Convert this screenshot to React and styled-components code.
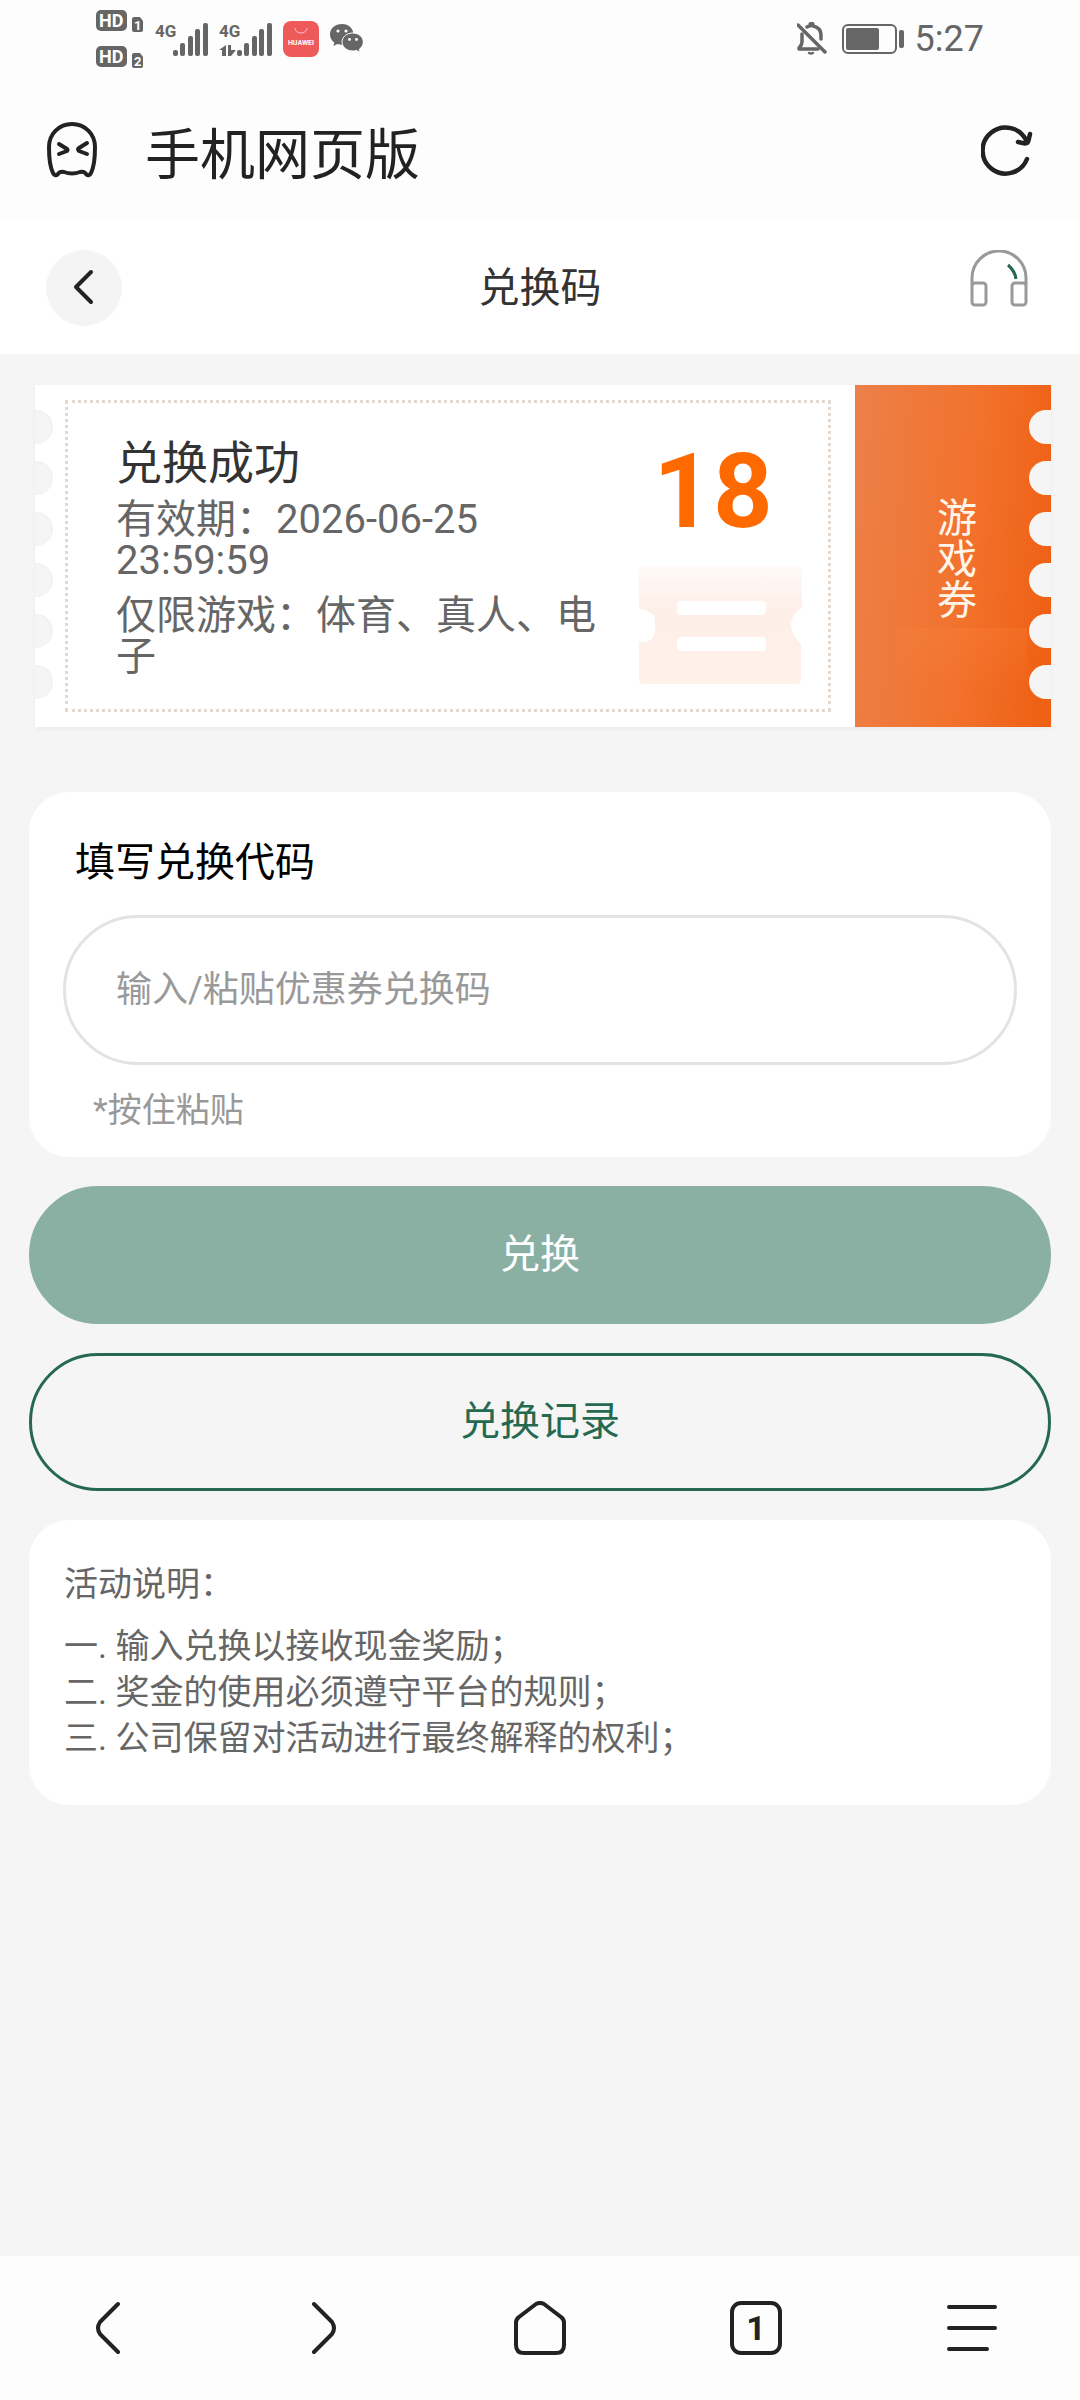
import React, { useState } from "react";
import styled, { createGlobalStyle } from "styled-components";

const GlobalStyle = createGlobalStyle`
  * {
    box-sizing: border-box;
  }

  body {
    margin: 0;
    background-color: #f5f5f5;
    font-family: Roboto, "Noto Sans CJK SC", sans-serif;
  }

  button,
  input {
    font-family: inherit;
  }
`;

const Page = styled.div`
  display: flex;
  flex-direction: column;
  min-height: 100vh;
`;

const StatusBar = styled.div`
  display: flex;
  justify-content: space-between;
  align-items: center;
  height: 78px;
  padding: 0 96px;
  background-color: #fdfdfd;
  color: #666;
`;

const StatusGroup = styled.div`
  display: flex;
  align-items: center;
  gap: 11px;
`;

const Clock = styled.span`
  font-size: 36px;
  line-height: 40px;
`;

const AppBar = styled.header`
  display: flex;
  align-items: center;
  gap: 46px;
  height: 144px;
  padding: 0 47px;
  background-color: #fdfdfd;
`;

const SiteName = styled.span`
  flex: 1;
  padding-top: 10px;
  color: #222;
  font-size: 55px;
  line-height: 60px;
`;

const IconButton = styled.button`
  display: flex;
  align-items: center;
  justify-content: center;
  padding: 0;
  border: 0;
  background-color: transparent;
  cursor: pointer;
`;

const NavBar = styled.nav`
  display: grid;
  grid-template-columns: 1fr auto 1fr;
  align-items: center;
  height: 132px;
  padding: 0 46px;
  background-color: #fff;
`;

const BackButton = styled(IconButton)`
  width: 76px;
  height: 76px;
  border-radius: 50%;
  background-color: #f4f4f4;
`;

const ServiceButton = styled(IconButton)`
  justify-self: end;
`;

const PageTitle = styled.h1`
  margin: 0;
  color: #333;
  font-size: 41px;
  font-weight: 400;
  line-height: 48px;
`;

const Main = styled.main`
  flex: 1;
  display: flex;
  flex-direction: column;
  gap: 29px;
  padding: 31px 29px;
`;

const Ticket = styled.section`
  position: relative;
  display: flex;
  margin: 0 0 36px 6px;
  box-shadow: 0 2px 4px rgba(0, 0, 0, 0.04);
`;

const TicketBody = styled.div`
  flex: 1;
  padding: 15px 24px 15px 30px;
  background-color: #fff;
`;

const TicketFrame = styled.div`
  display: flex;
  justify-content: space-between;
  min-height: 312px;
  padding: 0 26px 0 48px;
  border: 3px dotted #e4d8ce;
`;

const TicketText = styled.div`
  width: 500px;
  padding-top: 34px;
`;

const TicketTitle = styled.h2`
  margin: 0 0 10px;
  color: #333;
  font-size: 46px;
  font-weight: 400;
  line-height: 52px;
`;

const TicketLine = styled.p`
  margin: 0 0 14px;
  color: #666;
  font-size: 40px;
  line-height: 41px;
`;

const TicketSide = styled.div`
  display: flex;
  flex-direction: column;
  gap: 22px;
  padding-top: 37px;
`;

const Amount = styled.strong`
  padding-right: 14px;
  color: #ff6a00;
  font-size: 104px;
  font-weight: 700;
  line-height: 104px;
  text-align: center;
`;

const TicketStub = styled.div`
  display: flex;
  align-items: center;
  justify-content: center;
  width: 196px;
  padding: 6px 0 0 8px;
  background: linear-gradient(
        rgba(255, 140, 70, 0.18),
        rgba(255, 140, 70, 0)
      )
      42px 243px / 130px 60px no-repeat,
    linear-gradient(95deg, #ec8049 0%, #f2722d 55%, #ef6216 92%);
`;

const StubLabel = styled.span`
  width: 40px;
  color: #fff5ea;
  font-size: 40px;
  line-height: 41px;
  word-break: break-all;
`;

const Notches = styled.div`
  position: absolute;
  top: 25px;
  ${(props) => (props.$side === "left" ? "left: 0;" : "right: 0;")}
  display: flex;
  flex-direction: column;
  gap: 17px;
`;

const Notch = styled.span`
  width: ${(props) => (props.$side === "left" ? "18px" : "22px")};
  height: 34px;
  border-radius: ${(props) =>
    props.$side === "left" ? "0 17px 17px 0" : "17px 0 0 17px"};
  background-color: #f5f5f5;
  box-shadow: ${(props) =>
    props.$side === "left" ? "inset -1px 1px 3px #f0f0f0" : "none"};
`;

const Card = styled.section`
  padding: ${(props) => props.$padding};
  border-radius: 40px;
  background-color: #fff;
`;

const CodeLabel = styled.label`
  display: block;
  padding-left: 12px;
  margin-bottom: 24px;
  color: #000;
  font-size: 40px;
  line-height: 56px;
`;

const CodeInput = styled.input`
  display: block;
  width: 100%;
  height: 150px;
  padding: 0 50px;
  border: 3px solid #e3e3e3;
  border-radius: 75px;
  background-color: #fff;
  color: #333;
  font-size: 36px;
  outline: none;

  &::placeholder {
    color: #999;
    opacity: 1;
  }
`;

const Hint = styled.p`
  margin: 22px 0 0 30px;
  color: #999;
  font-size: 34px;
  line-height: 46px;
`;

const ActionButton = styled.button`
  height: 138px;
  border: 3px solid ${(props) => (props.$outline ? "#256a50" : "#8ab0a3")};
  border-radius: 69px;
  background-color: ${(props) => (props.$outline ? "transparent" : "#8ab0a3")};
  color: ${(props) => (props.$outline ? "#256a50" : "#fff")};
  font-size: 40px;
  line-height: 48px;
  cursor: pointer;
`;

const RulesTitle = styled.h3`
  margin: 0 0 16px;
  color: #666;
  font-size: 34px;
  font-weight: 400;
  line-height: 46px;
`;

const RulesList = styled.ol`
  margin: 0;
  padding: 0;
  list-style: none;
  color: #666;
  font-size: 34px;
  line-height: 46px;
`;

const BottomBar = styled.footer`
  display: grid;
  grid-template-columns: repeat(5, 1fr);
  align-items: center;
  height: 144px;
  background-color: #fdfdfd;
`;

const TabCount = styled.span`
  display: flex;
  align-items: center;
  justify-content: center;
  width: 52px;
  height: 54px;
  border: 4px solid #222;
  border-radius: 11px;
  color: #222;
  font-size: 34px;
  font-weight: 700;
  line-height: 34px;
`;

const rules = [
  "一. 输入兑换以接收现金奖励；",
  "二. 奖金的使用必须遵守平台的规则；",
  "三. 公司保留对活动进行最终解释的权利；",
];

const HdIcon = () => (
  <svg width="48" height="58" viewBox="0 0 48 58" fill="#666">
    {[0, 36].map((y, i) => (
      <g key={y} transform={`translate(0 ${y})`}>
        <rect width="31" height="21" rx="5" />
        <text x="3" y="17" fill="#fff" fontSize="18" fontWeight="700">
          HD
        </text>
        <path d="M36 9q0-2 2-2h6l3 4v9q0 2-2 2h-7q-2 0-2-2z" />
        <text x="38" y="20" fill="#fff" fontSize="13" fontWeight="700">
          {i + 1}
        </text>
      </g>
    ))}
  </svg>
);

const SignalIcon = ({ data }) => (
  <svg width="53" height="40" viewBox="0 -3 53 40" fill="#666">
    <text
      x="0"
      y="15"
      fontFamily="Liberation Sans Narrow, Roboto, sans-serif"
      fontSize="17"
      fontWeight="700"
    >
      4G
    </text>
    {data && <path d="M7 23v11H3v-6H0zM9 23h3v5l5 0-5 6H9z" />}
    <rect x="18" y="28" width="5" height="6" rx="2" />
    <rect x="25" y="21" width="5" height="13" rx="2" />
    <rect x="33" y="14" width="5" height="20" rx="2" />
    <rect x="40" y="7" width="5" height="27" rx="2" />
    <rect x="48" y="1" width="5" height="33" rx="2" />
  </svg>
);

const StoreIcon = () => (
  <svg width="36" height="36" viewBox="0 0 36 36">
    <rect width="36" height="36" rx="8" fill="#ee5a5a" />
    <path d="M12 7a6 5 0 0 0 12 0" fill="none" stroke="#fbd" strokeWidth="1" />
    <text
      x="18"
      y="24"
      fill="#fff"
      fontSize="7"
      fontWeight="700"
      textAnchor="middle"
    >
      HUAWEI
    </text>
  </svg>
);

const ChatIcon = () => (
  <svg width="34" height="30" viewBox="0 0 34 30" fill="#666">
    <path d="M12 0C5 0 0 4.600 0 10.500c0 3.300 1.700 6.200 4.400 8.200L3.300 22l4.200-2c1.400.5 3 .7 4.500.7C19 20.700 23.500 16 23.500 10.500S19 0 12 0z" />
    <path
      d="M22.800 9c-6 0-10.800 4-10.800 9s4.800 9 10.800 9c1.300 0 2.600-.2 3.700-.6l3.800 2-1-3.200c2.500-1.600 4-4.200 4-7.200 0-5-4.500-9-10.500-9z"
      stroke="#fdfdfd"
    />
    <g fill="#fdfdfd">
      <circle cx="8" cy="7" r="1.600" />
      <circle cx="16" cy="7" r="1.600" />
      <circle cx="19.500" cy="15.500" r="1.400" />
      <circle cx="26.500" cy="15.500" r="1.400" />
    </g>
  </svg>
);

const MuteIcon = () => (
  <svg
    width="34"
    height="34"
    viewBox="1 0 34 34"
    fill="none"
    stroke="#666"
    strokeWidth="3.500"
    strokeLinecap="round"
    strokeLinejoin="round"
  >
    <path d="M6 12v8q0 3-3 6v1h19M11 5q1-1 3-1V3a1.500 1.500 0 0 1 3 0v1c5 1 8 4 8 9v4" />
    <path d="M2 3l27 27" />
    <path d="M13 31q2 1 4 0" strokeWidth="2.500" />
  </svg>
);

const BatteryIcon = () => (
  <svg width="62" height="30" viewBox="0 0 62 30" fill="#666">
    <rect
      x="1"
      y="1"
      width="53"
      height="28"
      rx="5"
      fill="none"
      stroke="#666"
      strokeWidth="2"
    />
    <rect x="4" y="4" width="33" height="22" rx="2" />
    <rect x="57" y="6" width="5" height="18" rx="2" />
  </svg>
);

const GhostIcon = () => (
  <svg
    width="52"
    height="56"
    viewBox="0 0 52 56"
    fill="none"
    stroke="#222"
    strokeWidth="4"
    strokeLinecap="round"
    strokeLinejoin="round"
  >
    <path d="M25 2C12 2 2 12 2 25c0 10 1 20 4 26q2 4 5 1q2-3 6-2q8 3 16 0q4-1 6 2q3 3 5-1c3-6 4-16 4-26C48 12 38 2 25 2z" />
    <path d="M12 22l8 5q1 1 0 2l-8 3M40 21l-8 5q-2 1 0 3l8 3" />
  </svg>
);

const RefreshIcon = () => (
  <svg
    width="52"
    height="52"
    viewBox="0 0 52 52"
    fill="none"
    stroke="#222"
    strokeWidth="4.500"
    strokeLinecap="round"
    strokeLinejoin="round"
  >
    <path d="M46 35A23 23 0 1 1 45.500 17" />
    <path d="M37 18l7 1.500q3 0 3.500-3L49 10" />
  </svg>
);

const HeadphoneIcon = () => (
  <svg
    width="64"
    height="76"
    viewBox="1 1 64 76"
    fill="none"
    stroke="#999"
    strokeWidth="3"
  >
    <path d="M3 36V29a27 27 0 0 1 54 0v7" />
    <rect x="3" y="34" width="14" height="22" rx="3" />
    <rect x="43" y="34" width="14" height="22" rx="3" />
    <path d="M39 16q7 6 8 14" stroke="#24664e" />
  </svg>
);

const CouponMark = () => (
  <svg width="164" height="118" viewBox="0 0 164 118">
    <defs>
      <linearGradient id="coupon" x1="0" y1="0" x2="0" y2="1">
        <stop offset="0" stopColor="#fffaf8" />
        <stop offset="0.400" stopColor="#feeee8" />
        <stop offset="1" stopColor="#fff1ea" />
      </linearGradient>
    </defs>
    <path
      fill="url(#coupon)"
      d="M4 0h156q4 0 4 4v38l-4 2q-14 14 0 31l3 3v36q0 4-4 4H5q-4 0-4-4V76h6q10-2 10-12V54q0-6-8-9l-8-3L0 4q0-4 4-4z"
    />
    <rect x="39" y="35" width="89" height="14" rx="4" fill="#fff" />
    <rect x="39" y="71" width="89" height="14" rx="4" fill="#fff" />
  </svg>
);

const LineIcon = ({ d, width = 52 }) => (
  <svg
    width={width}
    height="54"
    viewBox={`0 0 ${width} 54`}
    fill="none"
    stroke="#222"
    strokeWidth="4"
    strokeLinecap="round"
    strokeLinejoin="round"
  >
    <path d={d} />
  </svg>
);

export default function App() {
  const [code, setCode] = useState("");

  const renderNotches = (side) => (
    <Notches $side={side}>
      {[0, 1, 2, 3, 4, 5].map((n) => (
        <Notch key={n} $side={side} />
      ))}
    </Notches>
  );

  return (
    <Page>
      <GlobalStyle />
      <StatusBar>
        <StatusGroup>
          <HdIcon />
          <SignalIcon />
          <SignalIcon data />
          <StoreIcon />
          <ChatIcon />
        </StatusGroup>
        <StatusGroup>
          <MuteIcon />
          <BatteryIcon />
          <Clock>5:27</Clock>
        </StatusGroup>
      </StatusBar>

      <AppBar>
        <GhostIcon />
        <SiteName>手机网页版</SiteName>
        <IconButton aria-label="刷新">
          <RefreshIcon />
        </IconButton>
      </AppBar>

      <NavBar>
        <BackButton aria-label="返回">
          <LineIcon width={24} d="M19 11L4 26l15 15" />
        </BackButton>
        <PageTitle>兑换码</PageTitle>
        <ServiceButton aria-label="客服">
          <HeadphoneIcon />
        </ServiceButton>
      </NavBar>

      <Main>
        <Ticket>
          <TicketBody>
            <TicketFrame>
              <TicketText>
                <TicketTitle>兑换成功</TicketTitle>
                <TicketLine>有效期：2026-06-25 23:59:59</TicketLine>
                <TicketLine>仅限游戏：体育、真人、电子</TicketLine>
              </TicketText>
              <TicketSide>
                <Amount>18</Amount>
                <CouponMark />
              </TicketSide>
            </TicketFrame>
          </TicketBody>
          <TicketStub>
            <StubLabel>游戏券</StubLabel>
          </TicketStub>
          {renderNotches("left")}
          {renderNotches("right")}
        </Ticket>

        <Card $padding="43px 34px 24px">
          <CodeLabel htmlFor="code">填写兑换代码</CodeLabel>
          <CodeInput
            id="code"
            type="text"
            placeholder="输入/粘贴优惠券兑换码"
            value={code}
            onChange={(e) => setCode(e.target.value)}
          />
          <Hint>*按住粘贴</Hint>
        </Card>

        <ActionButton>兑换</ActionButton>
        <ActionButton $outline>兑换记录</ActionButton>

        <Card $padding="41px 35px 44px">
          <RulesTitle>活动说明：</RulesTitle>
          <RulesList>
            {rules.map((rule) => (
              <li key={rule}>{rule}</li>
            ))}
          </RulesList>
        </Card>
      </Main>

      <BottomBar>
        <IconButton aria-label="后退">
          <LineIcon width={26} d="M23 3L5 21q-4 6 0 12l18 18" />
        </IconButton>
        <IconButton aria-label="前进">
          <LineIcon width={26} d="M3 3l18 18q4 6 0 12L3 51" />
        </IconButton>
        <IconButton aria-label="主页">
          <LineIcon d="M22 3q4-2 8 0l17 13q3 2 3 6v22q0 8-8 8H10q-8 0-8-8V22q0-4 3-6z" />
        </IconButton>
        <IconButton aria-label="标签页">
          <TabCount>1</TabCount>
        </IconButton>
        <IconButton aria-label="菜单">
          <LineIcon d="M3 6h46M3 27h46M3 48h38" />
        </IconButton>
      </BottomBar>
    </Page>
  );
}
